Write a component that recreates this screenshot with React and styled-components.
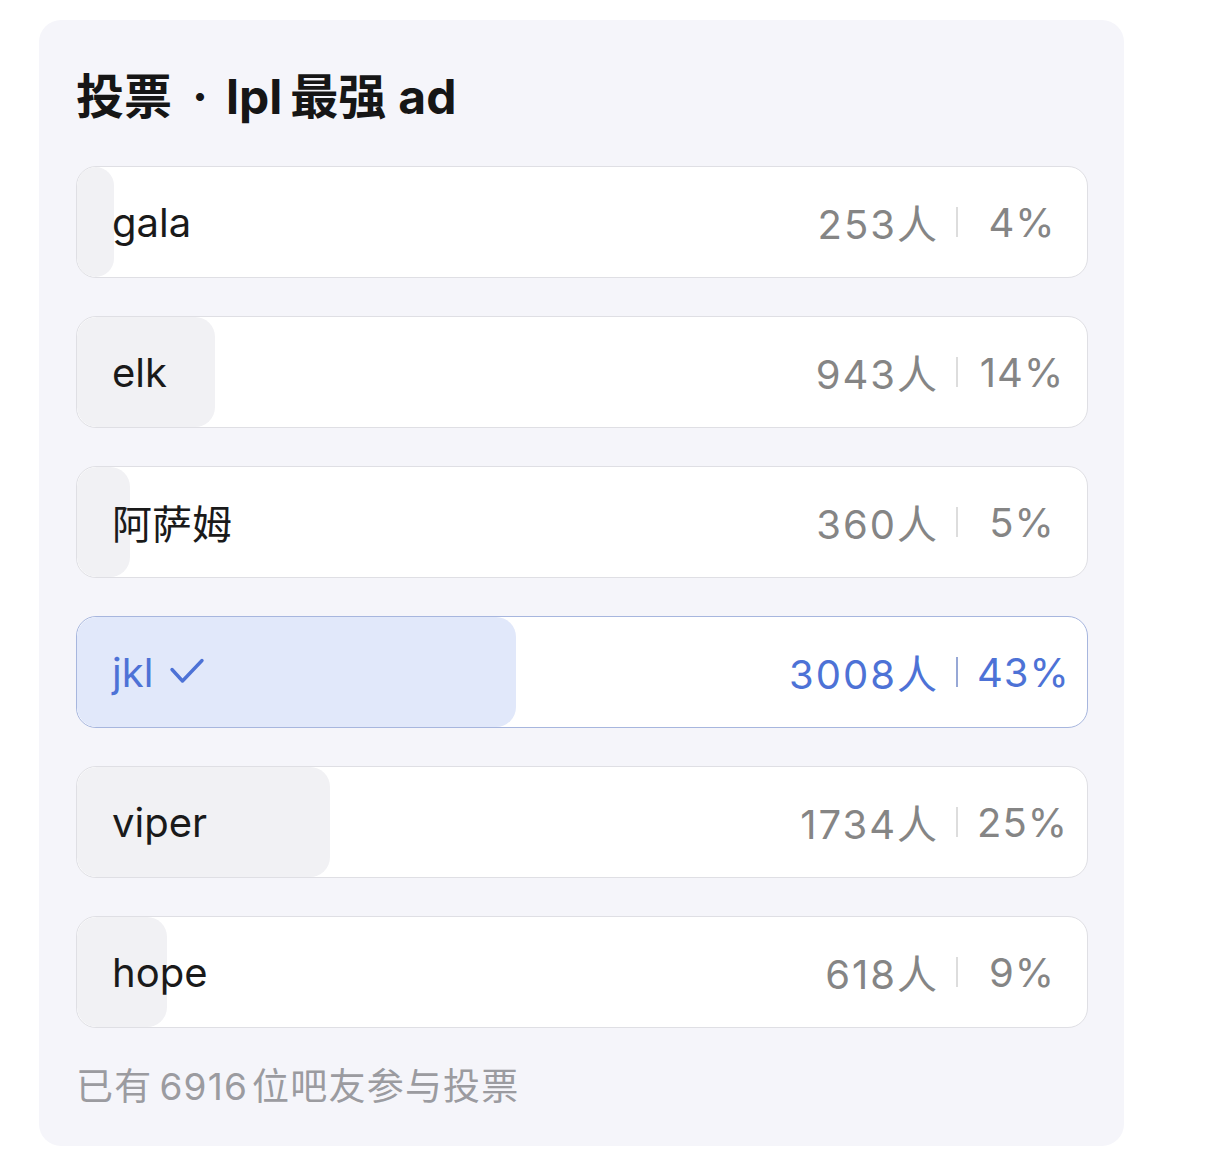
import React from 'react';
import styled, { createGlobalStyle } from 'styled-components'

const GlobalStyle = createGlobalStyle`
  body {
    margin: 0;
    background: #ffffff;
    font-family: Inter, "Noto Sans CJK SC", sans-serif;
  }
`

const options = [
    {name: 'gala', count: 253},
    {name: 'elk', count: 943},
    {name: '阿萨姆', count: 360},
    {name: 'jkl', count: 3008, picked: true},
    {name: 'viper', count: 1734},
    {name: 'hope', count: 618},
]

const CheckMark = () => (
    <svg width="36" height="30" viewBox="0 0 36 30" fill="none">
        <path d="M3 12.5 L13.5 24 L33 3.5" stroke="#4d72d6" strokeWidth="3.4" strokeLinecap="round" strokeLinejoin="round"/>
    </svg>
)

const App = () => {
    const total = options.reduce((sum, o) => sum + o.count, 0)
    return (
        <Page>
            <GlobalStyle/>
            <Card>
                <Title>投票<Dot>·</Dot>lpl<Gap/>最强<Gap wide/>ad</Title>
                <List>
                    {options.map(o => {
                        const share = o.count / total * 100
                        return (
                            <Row key={o.name} picked={o.picked}>
                                <Fill picked={o.picked} style={{width: share + '%'}}/>
                                <Name picked={o.picked}>
                                    {o.name}
                                    {o.picked && <CheckMark/>}
                                </Name>
                                <Stats picked={o.picked}>
                                    <Count>{o.count}人</Count>
                                    <Divider picked={o.picked}/>
                                    <Percent>{Math.round(share)}%</Percent>
                                </Stats>
                            </Row>
                        )
                    })}
                </List>
                <Footer>已有<Num>{total}</Num>位吧友参与投票</Footer>
            </Card>
        </Page>
    );
};

const Page = styled.div`
  padding: 20px 0 0 39px;
`

const Card = styled.div`
  width: 1085px;
  box-sizing: border-box;
  background-color: #f5f5fa;
  border-radius: 22px;
  padding: 49px 36px 35px 37px;
`

const Title = styled.h1`
  display: flex;
  align-items: center;
  margin: 0 0 41px;
  font-size: 48px;
  line-height: 56px;
  font-weight: 700;
  color: #161616;
`

const Dot = styled.span`
  margin: 0 18px 0 20px;
`

const Gap = styled.span`
  display: inline-block;
  width: ${p => p.wide ? '12px' : '8px'};
`

const List = styled.div`
  display: flex;
  flex-direction: column;
  gap: 38px;
`

const Row = styled.div`
  position: relative;
  height: 112px;
  box-sizing: border-box;
  display: flex;
  align-items: center;
  justify-content: space-between;
  background-color: #ffffff;
  border: 1px solid ${p => p.picked ? '#a7b6de' : '#dfdfe4'};
  border-radius: 20px;
  overflow: hidden;
`

const Fill = styled.div`
  position: absolute;
  left: 0;
  top: 0;
  bottom: 0;
  border-radius: 20px;
  background-color: ${p => p.picked ? '#e1e8fa' : '#f1f1f4'};
`

const Name = styled.div`
  position: relative;
  display: flex;
  align-items: center;
  gap: 16px;
  padding-left: 35px;
  font-size: 40px;
  color: ${p => p.picked ? '#4d72d6' : '#1a1a1a'};
`

const Stats = styled.div`
  position: relative;
  display: flex;
  align-items: center;
  padding-right: 20px;
  font-size: 40px;
  color: ${p => p.picked ? '#4d72d6' : '#858585'};
`

const Count = styled.span`
  letter-spacing: 2px;
`

const Divider = styled.span`
  width: 2px;
  height: 30px;
  margin: 0 19px 0 17px;
  background-color: ${p => p.picked ? '#97a8d6' : '#dddddd'};
`

const Percent = styled.span`
  width: 90px;
  text-align: center;
  letter-spacing: 1px;
`

const Footer = styled.div`
  margin-top: 35px;
  font-size: 37px;
  line-height: 48px;
  letter-spacing: 1.2px;
  color: #9b9ba0;
`

const Num = styled.span`
  margin: 0 4px 0 7px;
`

export default App;
